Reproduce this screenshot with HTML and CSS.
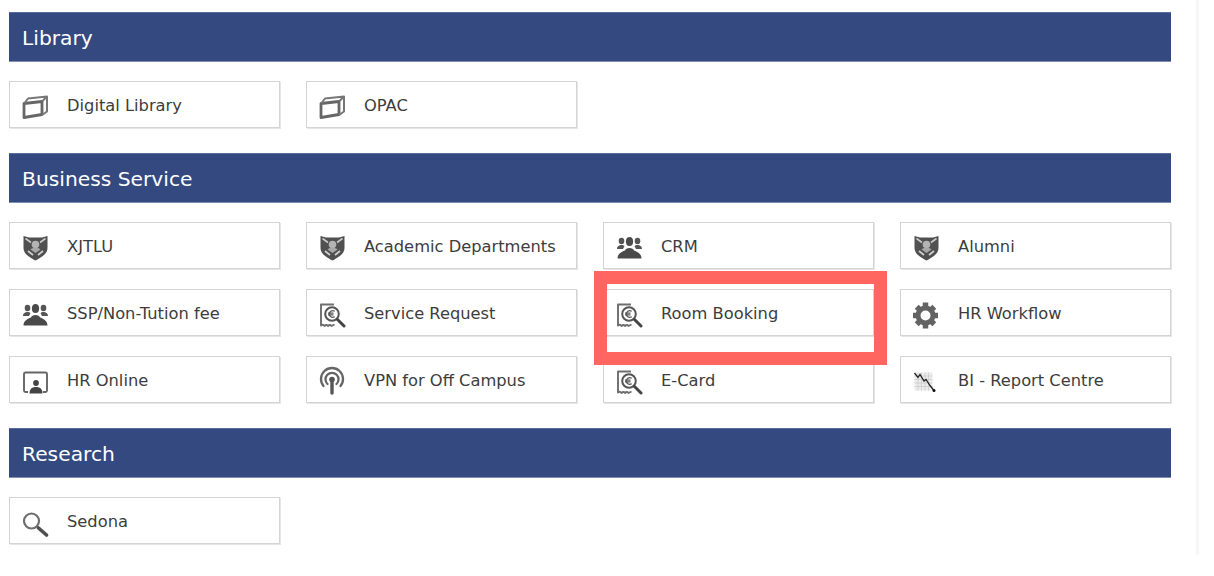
FILE: index.html
```html
<!DOCTYPE html>
<html lang="en">
<head>
<meta charset="utf-8">
<title>Services</title>
<link rel="stylesheet" href="styles.css">
</head>
<body>
<svg class="defs" width="0" height="0" aria-hidden="true">
  <symbol id="i-book" viewBox="0 0 28 28" overflow="visible">
    <path d="M2 12.500 L20 10.500 V23.500 L2 26.500 Z" fill="none" stroke="#666" stroke-width="2.800" stroke-linejoin="round"/>
    <path d="M2.500 12 L6 7.500 L25 5.500 L20 10.500 M25 5.500 V20.500 L20 24" fill="none" stroke="#777" stroke-width="2" stroke-linejoin="round"/>
  </symbol>
  <symbol id="i-shield" viewBox="0 0 28 28" overflow="visible">
    <path d="M1.500 4 L7 5.500 H20 L25.500 4 V16 C25.500 22 19 25.500 13.500 28.500 C8 25.500 1.500 22 1.500 16 Z" fill="#505050"/>
    <path d="M3.500 6.500 L9 10.500 M23.500 6.500 L18 10.500" stroke="#c8c8c8" stroke-width="1.700" fill="none"/>
    <circle cx="13.500" cy="12.500" r="3.800" fill="#b4b4b4"/>
    <path d="M8.500 17.500 C10 15 17 15 18.500 17.500 L13.500 21 Z" fill="#a8a8a8"/>
    <path d="M6 19 L11 23 M21 19 L16 23" stroke="#d0d0d0" stroke-width="1.700" fill="none"/>
  </symbol>
  <symbol id="i-people" viewBox="0 0 28 28" overflow="visible">
    <ellipse cx="5.500" cy="9" rx="2.800" ry="3.200" fill="#555"/>
    <ellipse cx="21.500" cy="9" rx="2.800" ry="3.200" fill="#555"/>
    <ellipse cx="13.500" cy="9.500" rx="3.600" ry="4.500" fill="#4a4a4a"/>
    <path d="M1 17 C1 14 3.500 13 5.500 13 C7 13 7.800 13.500 8.500 14 L7 17 Z M26 17 C26 14 23.500 13 21.500 13 C20 13 19.200 13.500 18.500 14 L20 17 Z" fill="#555"/>
    <path d="M1.500 26.500 C1.500 22 5 20 9 18.500 C9.500 15 17.500 15 18 18.500 C22 20 25.500 22 25.500 26.500 Z" fill="#4a4a4a"/>
  </symbol>
  <symbol id="i-screen" viewBox="0 0 28 28" overflow="visible">
    <path d="M6 26 H3.500 Q2 26 2 24.500 V8 Q2 6.500 3.500 6.500 H23.500 Q25 6.500 25 8 V24.500 Q25 26 23.500 26 H21" fill="none" stroke="#666" stroke-width="1.900"/>
    <circle cx="14" cy="17" r="2.900" fill="#444"/>
    <path d="M7.500 27.500 C7.500 23 10 21 14 21 C18 21 20.500 23 20.500 27.500 Z" fill="#444"/>
  </symbol>
  <symbol id="i-receipt" viewBox="0 0 28 28" overflow="visible">
    <path d="M15 5.500 H2 V26.500 Q4 25 5.500 27 Q7.500 25 9 27 Q11 25 12.500 27 L15.500 25.500" fill="none" stroke="#6e6e6e" stroke-width="1.900" stroke-linejoin="round"/>
    <circle cx="13" cy="15" r="6.800" fill="#fff" stroke="#555" stroke-width="2"/>
    <path d="M15.800 12.200 C12.500 10.800 10.300 12.800 10.300 15 C10.300 17.200 12.500 19.200 15.800 17.800 M9 14.200 H14.500 M9 15.800 H14.500" fill="none" stroke="#555" stroke-width="1.200"/>
    <path d="M18.500 20.500 L25 27" stroke="#444" stroke-width="3" stroke-linecap="round"/>
  </symbol>
  <symbol id="i-antenna" viewBox="0 0 28 28" overflow="visible">
    <path d="M4.500 20 A11 11 0 1 1 21.500 20" fill="none" stroke="#666" stroke-width="2.300" stroke-linecap="round"/>
    <path d="M8.500 18 A6.500 6.500 0 1 1 17.500 18" fill="none" stroke="#666" stroke-width="2.300" stroke-linecap="round"/>
    <circle cx="13" cy="13.500" r="2.800" fill="#555"/>
    <path d="M13 14 V27" stroke="#555" stroke-width="3.400" stroke-linecap="round"/>
  </symbol>
  <symbol id="i-gear" viewBox="0 0 28 28" overflow="visible">
    <circle cx="12.500" cy="16.500" r="7.500" fill="none" stroke="#636363" stroke-width="5"/>
    <g stroke="#636363" stroke-width="5.500">
      <path d="M12.500 3.500 V9"/><path d="M12.500 24 V29.500"/><path d="M0 16.500 H5"/><path d="M20 16.500 H25"/>
      <path d="M3.700 7.700 L7.500 11.500"/><path d="M17.500 21.500 L21.300 25.300"/><path d="M21.300 7.700 L17.500 11.500"/><path d="M7.500 21.500 L3.700 25.300"/>
    </g>
  </symbol>
  <symbol id="i-chart" viewBox="0 0 28 28" overflow="visible">
    <rect x="1.500" y="6.500" width="18" height="18" fill="#ececec"/>
    <path d="M5 6.500 V24.500 M8.500 6.500 V24.500 M12 6.500 V24.500 M15.500 6.500 V24.500 M1.500 10 H19.500 M1.500 13.500 H19.500 M1.500 17 H19.500 M1.500 20.500 H19.500" stroke="#c8c8c8" stroke-width=".7"/>
    <path d="M1.500 7 L5 11.500 L7 8.500 L11 15 L13 13.500 L17 19.500 L21 24.500" fill="none" stroke="#222" stroke-width="1.300"/>
    <circle cx="21" cy="24.500" r="1.500" fill="#111"/>
  </symbol>
  <symbol id="i-search" viewBox="0 0 28 28" overflow="visible">
    <circle cx="9.500" cy="14" r="7.500" fill="none" stroke="#6e6e6e" stroke-width="2.200"/>
    <path d="M16.500 21 L24.500 28" stroke="#4f4f4f" stroke-width="3.600" stroke-linecap="round"/>
  </symbol>
</svg>

<main class="page">
  <section class="group">
    <h2 class="band">Library</h2>
    <div class="tiles">
      <a class="tile"><svg class="icon"><use href="#i-book"/></svg><span>Digital Library</span></a>
      <a class="tile"><svg class="icon"><use href="#i-book"/></svg><span>OPAC</span></a>
    </div>
  </section>
  <section class="group">
    <h2 class="band">Business Service</h2>
    <div class="tiles">
      <a class="tile"><svg class="icon"><use href="#i-shield"/></svg><span>XJTLU</span></a>
      <a class="tile"><svg class="icon"><use href="#i-shield"/></svg><span>Academic Departments</span></a>
      <a class="tile"><svg class="icon"><use href="#i-people"/></svg><span>CRM</span></a>
      <a class="tile"><svg class="icon"><use href="#i-shield"/></svg><span>Alumni</span></a>
      <a class="tile"><svg class="icon"><use href="#i-people"/></svg><span>SSP/Non-Tution fee</span></a>
      <a class="tile"><svg class="icon"><use href="#i-receipt"/></svg><span>Service Request</span></a>
      <a class="tile"><svg class="icon"><use href="#i-receipt"/></svg><span>Room Booking</span></a>
      <a class="tile"><svg class="icon"><use href="#i-gear"/></svg><span>HR Workflow</span></a>
      <a class="tile"><svg class="icon"><use href="#i-screen"/></svg><span>HR Online</span></a>
      <a class="tile"><svg class="icon"><use href="#i-antenna"/></svg><span>VPN for Off Campus</span></a>
      <a class="tile"><svg class="icon"><use href="#i-receipt"/></svg><span>E-Card</span></a>
      <a class="tile"><svg class="icon"><use href="#i-chart"/></svg><span>BI - Report Centre</span></a>
    </div>
  </section>
  <section class="group">
    <h2 class="band">Research</h2>
    <div class="tiles">
      <a class="tile"><svg class="icon"><use href="#i-search"/></svg><span>Sedona</span></a>
    </div>
  </section>
  <div class="highlight"></div>
</main>
</body>
</html>
```

FILE: styles.css
```css
html, body {
  margin: 0;
  padding: 0;
  background: #fff;
}

body {
  font-family: "DejaVu Sans", Verdana, sans-serif;
  color: #3a3a3a;
  height: 576px;
  overflow: hidden;
}

.defs {
  position: absolute;
}

.page {
  position: relative;
  box-sizing: border-box;
  width: 1199px;
  height: 555px;
  padding: 12px 0 0 9px;
  border-right: 3px solid #f7f7f7;
  display: flex;
  flex-direction: column;
  gap: 25px;
}

.band {
  box-sizing: border-box;
  width: 1162px;
  height: 50px;
  margin: 0 0 19px;
  padding: 0 0 0 13px;
  background: #34497f;
  border-top: 1px solid #5a6d9c;
  border-bottom: 1px solid #7d8db4;
  color: #fff;
  font-size: 20.250px;
  font-weight: 400;
  line-height: 50px;
}

.tiles {
  display: grid;
  grid-template-columns: repeat(4, 271px);
  grid-auto-rows: 47px;
  column-gap: 26px;
  row-gap: 20px;
}

.tile {
  box-sizing: border-box;
  display: flex;
  align-items: center;
  gap: 17px;
  padding-left: 12px;
  border: 1px solid #d4d4d4;
  box-shadow: 1px 1px 0 #e6e6e6;
  font-size: 16.300px;
  color: #3d3d3d;
}

.tile span {
  padding-top: 1px;
}

.icon {
  flex: none;
  width: 28px;
  height: 28px;
  overflow: visible;
  filter: blur(0.35px);
}

.highlight {
  position: absolute;
  left: 594px;
  top: 271px;
  box-sizing: border-box;
  width: 293px;
  height: 94px;
  border: 13px solid rgba(255, 96, 88, 0.96);
}
```
